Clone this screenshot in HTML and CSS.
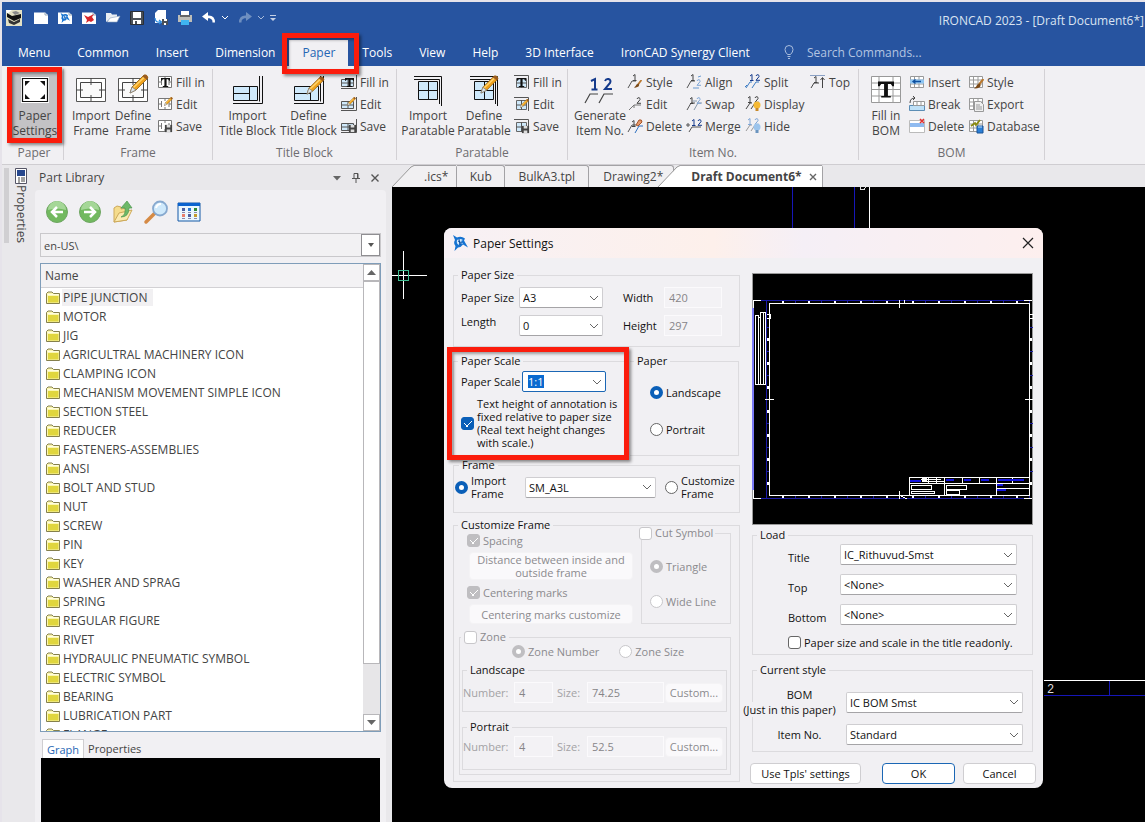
FILE: index.html
```html
<!DOCTYPE html>
<html lang="en">
<head>
<meta charset="utf-8">
<title>IRONCAD 2023 - [Draft Document6*]</title>
<link rel="stylesheet" href="styles.css">
</head>
<body>
<svg class="defs" aria-hidden="true">
  <symbol id="pencil" viewBox="0 0 20 20"><path d="M1 19l2-6L15 1q3-1 4 3L7 16z" fill="#f0a21c" stroke="#8a5a10" stroke-width=".8"/><path d="M4.500 13.500L16 2.500" stroke="#ffd36b" stroke-width="1.500"/><path d="M1 19l2-6 4 3z" fill="#dfe6ea" stroke="#777" stroke-width=".7"/><path d="M15 1q3-1 4 3l-1.500 1.500-4-3z" fill="#9c5c20"/></symbol>
  <symbol id="frame" viewBox="0 0 32 32"><path d="M1.500 4.500h29v23h-29z" fill="#fff" stroke="#555"/><path d="M5.500 8.500h21v15h-21z" fill="#fafafa" stroke="#444"/><path d="M16 4v7M16 21v6M1 16h7M24 16h7" stroke="#444"/></symbol>
  <symbol id="tblock" viewBox="0 0 32 32"><path d="M1.500 12.500h24v14h-24z" fill="#cfe9fb" stroke="#111"/><path d="M1 19.500h16M17.500 12v14" stroke="#111"/><path d="M27.500 2v25.500M30.500 2v27.500H1" fill="none" stroke="#111"/></symbol>
  <symbol id="ptable" viewBox="0 0 32 32"><path d="M6.500 7.500h19v18h-19z" fill="#cfe9fb" stroke="#111"/><path d="M6 16.500h20M16.500 7v19" stroke="#111"/><path d="M2 2.500h27.500V32M2 5.500h25.500v24.500" fill="none" stroke="#111"/></symbol>
  <symbol id="floppy" viewBox="0 0 10 10"><path d="M1 1h8v8H1z" fill="#444"/><path d="M3 1h4v3H3zM3 6h4v3H3z" fill="#ddd"/></symbol>
  <symbol id="s-frame" viewBox="0 0 16 16"><path d="M1.500 2.500h13v11h-13z" fill="#fff" stroke="#777"/><path d="M1 8h3M12 8h3M8 2v3M8 11v3M4.500 5v6M12 5v6" stroke="#777"/></symbol>
  <symbol id="s-block" viewBox="0 0 16 16"><path d="M.500 5.500h12v7H.500z" fill="#cfe9fb" stroke="#555"/><path d="M1 9h11M7 5v7M15.500 1v13.500H0" fill="none" stroke="#555"/></symbol>
  <symbol id="s-table" viewBox="0 0 16 16"><path d="M2.500 4.500h10v9h-10z" fill="#cfe9fb" stroke="#666"/><path d="M2 9h11M7.500 4v10M0 1.500h14.500V15" fill="none" stroke="#555"/></symbol>
  <symbol id="tee" viewBox="0 0 10 10"><path d="M0 0h10v3H9L8 1.500H6.200V9H8v1H2V9h1.800V1.500H2L1 3H0z" fill="#111"/></symbol>
  <symbol id="leader" viewBox="0 0 16 16"><path d="M1 14L5 7h4" fill="none" stroke="#555"/></symbol>
  <symbol id="one" viewBox="0 0 5 7"><path d="M1 2l2-1.500V6M1 6.500h3.500" fill="none" stroke="currentColor"/></symbol>
  <symbol id="two" viewBox="0 0 5 7"><path d="M1 2q.500-1.500 2-1.300 1.500.500 1 2L1 6.300h4" fill="none" stroke="currentColor"/></symbol>
  <symbol id="grid" viewBox="0 0 16 16"><path d="M1.500 2.500h13v11h-13z" fill="#fff" stroke="#999"/><path d="M1 6h14M1 10h14M5.500 2v12M10 2v12" stroke="#999"/></symbol>
  <symbol id="brush" viewBox="0 0 8 8"><path d="M7.500 0L4 4.500" stroke="#b9772c" stroke-width="1.800"/><path d="M4.500 3.500q1.500 1.500 0 3Q2 8 0 7.500 2 6 2.500 4.500z" fill="#7b4a18"/></symbol>
  <symbol id="folder" viewBox="0 0 15 13"><path d="M.500 12.500v-10L2 1h4l1.500 1.500h6v10z" fill="#fbf7b0" stroke="#85804c"/><path d="M2 5h10.500v6.500H2z" fill="#e0d63e"/><path d="M1.500 3.500h11" stroke="#fffde0"/></symbol>
  <symbol id="chev" viewBox="0 0 10 6"><path d="M1 1l4 4 4-4" fill="none" stroke="#666"/></symbol>
  <symbol id="page" viewBox="0 0 16 16"><path d="M1 2.500h11l3 2.500v9H1z" fill="#fff"/><path d="M12 2.500V5h3" fill="none" stroke="#9ab"/></symbol>
  <symbol id="gear" viewBox="0 0 16 16"><path d="M1 0l4 2.500q4-2 8 1l-1 2 4 7-5-3q-2 3-5 3l-3.500 3.500 1-5Q1 8 3 5z" fill="#1673d1"/><path d="M5 5q3-2 6 0l-2 1 2 3-3-1-1 2q-3-1-2-5z" fill="#cfe8ff"/><path d="M6 6l4 2M7 4l1 6" stroke="#0b4fa0"/></symbol>
</svg>

<header class="app-head">
  <div class="titlebar">
    <div class="quick">
      <svg class="i16 logo" viewBox="0 0 16 16"><path d="M0 0h16v16H0z" fill="#e4e1c4"/><path d="M0 0h6L1 4z" fill="#fff"/><path d="M1 3l5 3 9-2v4l-7 3-7-4z" fill="#111"/><path d="M2 9l6 3 6-3v3l-6 3-5-2z" fill="#333"/><path d="M6 2l4-1 4 2-5 2z" fill="#888"/></svg>
      <button aria-label="New"><svg class="i16"><use href="#page"/></svg></button>
      <button aria-label="New drawing"><svg class="i16"><use href="#page"/><use href="#gear" x="3" y="3" width="10" height="10"/></svg></button>
      <button aria-label="New scene"><svg class="i16"><use href="#page"/><path d="M3 5l4 2 6-3-2 3 2 3-3 2-2-1-3 2 1-3z" fill="#d7262b"/></svg></button>
      <button aria-label="Open"><svg class="i16" viewBox="0 0 16 16"><path d="M1 3h5l1 1.500h5V7L5 9l-4 3z" fill="#e9edf2"/><path d="M5 8l10-2-3 6H2z" fill="#fff" stroke="#8fa3bd" stroke-width=".6"/></svg></button>
      <button aria-label="Save"><svg class="i16" viewBox="0 0 16 16"><path d="M1.500 1.500h13v13h-13z" fill="#4a5058" stroke="#2a2e34"/><path d="M4 2h8v6H4zM4 10h8v4H4z" fill="#fff"/><path d="M6 11h2v3H6z" fill="#4a5058"/></svg></button>
      <button aria-label="Save as"><svg class="i16" viewBox="0 0 16 16"><path d="M5 0h8v13H2V3z" fill="#fff"/><path d="M2 8q0 5 6 4M6 10l2.500 2L6 14" fill="none" stroke="#2c8be0" stroke-width="1.300"/><path d="M9 9h6v6H9z" fill="#4a5058"/><path d="M11 9h3v2h-3zM11 13h2v2h-2z" fill="#fff"/></svg></button>
      <button aria-label="Print"><svg class="i16" viewBox="0 0 16 16"><path d="M4 1h8v5H4z" fill="#fff"/><path d="M1 5h14v7H1z" fill="#bdbdb8"/><path d="M3 5h10v2H3z" fill="#666"/><path d="M4 10h8v5H4z" fill="#3fb4f0"/></svg></button>
      <button aria-label="Undo"><svg class="i16" viewBox="0 0 16 16"><path d="M7 2v9L1 6.500zM6 5.500q8-1 8 7h-2.500Q12 8 6 8z" fill="#fff"/></svg></button>
      <svg class="mini" viewBox="0 0 8 6"><path d="M1 1l3 3 3-3" fill="none" stroke="#fff"/></svg>
      <button aria-label="Redo"><svg class="i16" viewBox="0 0 16 16"><path d="M9 2v9l6-4.500zM10 5.500q-8-1-8 7h2.500Q4 8 10 8z" fill="#6f8fc0"/></svg></button>
      <svg class="mini" viewBox="0 0 8 6"><path d="M1 1l3 3 3-3" fill="none" stroke="#a8bbdb"/></svg>
      <svg class="mini" viewBox="0 0 8 8"><path d="M1 1.500h6" stroke="#c5d0e4"/><path d="M1 4h6L4 7z" fill="#c5d0e4"/></svg>
    </div>
    <div class="app-title">IRONCAD 2023 - [Draft Document6*]</div>
  </div>
  <nav class="menubar">
    <button class="menu">Menu</button><button class="menu">Common</button><button class="menu">Insert</button><button class="menu">Dimension</button>
    <div class="marked"><button class="menu menu--on">Paper</button><span class="mark mark--tab"></span></div>
    <button class="menu">Tools</button><button class="menu">View</button><button class="menu">Help</button><button class="menu">3D Interface</button><button class="menu">IronCAD Synergy Client</button>
    <label class="search"><svg class="bulb" viewBox="0 0 10 14"><path d="M3.500 9.500Q1 7 1 4.500a4 4 0 018 0Q9 7 6.500 9.500zM3.500 11.500h3M4 13.500h2" fill="none" stroke="#a9bddd"/></svg><input type="text" placeholder="Search Commands..."></label>
  </nav>
</header>

<section class="ribbon">
  <div class="group">
    <div class="tools tools--paper">
      <div class="marked"><button class="big big--on"><svg class="i32" viewBox="0 0 32 32"><path d="M2 3h28v26H2z" fill="#fff"/><path d="M3.500 4.500h25v23h-25z" fill="none" stroke="#111" stroke-width="1.200"/><path d="M6 7h5l-5 5zM26 7v5l-5-5zM6 25v-5l5 5zM26 25h-5l5-5z" fill="#111"/></svg>Paper<br>Settings</button><span class="mark mark--big"></span></div>
    </div>
    <div class="caption">Paper</div>
  </div>
  <div class="group">
    <div class="tools tools--frame">
      <button class="big"><svg class="i32"><use href="#frame"/></svg>Import<br>Frame</button>
      <button class="big"><svg class="i32"><use href="#frame"/><use href="#pencil" x="12" y="0" width="20" height="20"/></svg>Define<br>Frame</button>
      <div class="stack">
        <button class="small"><svg class="i16"><use href="#s-frame"/><use href="#tee" x="4" y="4" width="9" height="9"/></svg>Fill in</button>
        <button class="small"><svg class="i16"><use href="#s-frame"/><use href="#pencil" x="7" y="1" width="9" height="9"/></svg>Edit</button>
        <button class="small"><svg class="i16"><use href="#s-frame"/><use href="#floppy" x="7" y="6" width="9" height="9"/></svg>Save</button>
      </div>
    </div>
    <div class="caption">Frame</div>
  </div>
  <div class="group">
    <div class="tools tools--title">
      <button class="big"><svg class="i32"><use href="#tblock"/></svg>Import<br>Title Block</button>
      <button class="big"><svg class="i32"><use href="#tblock"/><use href="#pencil" x="13" y="2" width="19" height="19"/></svg>Define<br>Title Block</button>
      <div class="stack">
        <button class="small"><svg class="i16"><use href="#s-block"/><use href="#tee" x="4" y="4" width="9" height="9"/></svg>Fill in</button>
        <button class="small"><svg class="i16"><use href="#s-block"/><use href="#pencil" x="6" y="1" width="9" height="9"/></svg>Edit</button>
        <button class="small"><svg class="i16"><use href="#s-block"/><use href="#floppy" x="7" y="6" width="9" height="9"/></svg>Save</button>
      </div>
    </div>
    <div class="caption">Title Block</div>
  </div>
  <div class="group">
    <div class="tools tools--para">
      <button class="big"><svg class="i32"><use href="#ptable"/></svg>Import<br>Paratable</button>
      <button class="big"><svg class="i32"><use href="#ptable"/><use href="#pencil" x="12" y="1" width="19" height="19"/></svg>Define<br>Paratable</button>
      <div class="stack">
        <button class="small"><svg class="i16"><use href="#s-table"/><use href="#tee" x="3" y="4" width="9" height="9"/></svg>Fill in</button>
        <button class="small"><svg class="i16"><use href="#s-table"/><use href="#pencil" x="6" y="3" width="9" height="9"/></svg>Edit</button>
        <button class="small"><svg class="i16"><use href="#s-table"/><use href="#floppy" x="7" y="7" width="9" height="9"/></svg>Save</button>
      </div>
    </div>
    <div class="caption">Paratable</div>
  </div>
  <div class="group">
    <div class="tools tools--item">
      <button class="big"><svg class="i32 navy" viewBox="0 0 32 32"><path d="M7 7l4-2v10M7.500 15.500h6" fill="none" stroke="currentColor" stroke-width="2"/><path d="M21 7q1-2.500 3.500-2 3 1 1.500 4l-5 6h7" fill="none" stroke="currentColor" stroke-width="2"/><path d="M1 29l5-9h8M15 29l5-9h9" fill="none" stroke="#444" stroke-width="1.200"/></svg>Generate<br>Item No.</button>
      <div class="stack">
        <button class="small"><svg class="i16"><use href="#leader"/><use href="#one" x="5" y="0" width="5" height="7"/><use href="#brush" x="7" y="6" width="8" height="8"/></svg>Style</button>
        <button class="small"><svg class="i16"><use href="#two" x="9" y="1" width="5" height="7"/><path d="M2 14l5-5h7M7 9v3" fill="none" stroke="#777"/></svg>Edit</button>
        <button class="small"><svg class="i16"><use href="#leader"/><path d="M8 15l4-7h4" stroke="#2c6fc0" fill="none"/><use href="#one" x="4" y="2" width="5" height="7"/><path d="M9 7l3-5q3-1 3 2l-4 4z" fill="#e79a6c" stroke="#a4552a"/></svg>Delete</button>
      </div>
      <div class="stack">
        <button class="small"><svg class="i16"><use href="#leader"/><use href="#one" x="4" y="0" width="5" height="7"/><use href="#two" x="10" y="5" width="5" height="7" class="sky"/><path d="M7 14h6M12 3l3-1" stroke="#6a9bd1"/></svg>Align</button>
        <button class="small"><svg class="i16"><use href="#leader"/><path d="M8 14l4-7h4M7 5h4" stroke="#89a" fill="none"/><use href="#one" x="3" y="1" width="5" height="7"/><use href="#two" x="10" y="1" width="5" height="7" class="sky"/></svg>Swap</button>
        <button class="small"><svg class="i16"><path d="M0 7h4M2 5v4M3 14l3-5h9" fill="none" stroke="#555"/><use href="#one" x="5" y="1" width="5" height="7" class="navy"/><use href="#two" x="11" y="1" width="5" height="7" class="navy"/></svg>Merge</button>
      </div>
      <div class="stack">
        <button class="small"><svg class="i16"><path d="M1 14l4-6h2M7 14l4-6h3M2 11l-2 2" fill="none" stroke="#3c7cc4"/><use href="#one" x="4" y="0" width="5" height="7" class="navy"/><use href="#two" x="10" y="0" width="5" height="7" class="navy"/></svg>Split</button>
        <button class="small"><svg class="i16"><path d="M1 13l4-6h2M6 13l4-6" fill="none" stroke="#444"/><use href="#one" x="2" y="0" width="5" height="7"/><use href="#two" x="9" y="0" width="5" height="7"/><circle cx="12" cy="9" r="3.500" fill="#f5b935"/><path d="M10.500 12h3v3h-3z" fill="#c88a2a"/></svg>Display</button>
        <button class="small"><svg class="i16"><path d="M1 13l4-6h2M6 13l4-6" fill="none" stroke="#999"/><use href="#one" x="2" y="0" width="5" height="7" class="sky"/><use href="#two" x="9" y="0" width="5" height="7" class="sky"/><circle cx="12" cy="9" r="3.500" fill="#9cc4ec"/><path d="M10.500 12h3v3h-3z" fill="#6a94bf"/></svg>Hide</button>
      </div>
      <div class="stack">
        <button class="small"><svg class="i16"><path d="M0 1.500h15" stroke="#8aa0c4"/><path d="M1 14l3-5h5M12.500 14V4M10.500 6l2-2.500 2 2.500" fill="none" stroke="#444"/><use href="#one" x="3" y="2" width="5" height="7"/></svg>Top</button>
      </div>
    </div>
    <div class="caption">Item No.</div>
  </div>
  <div class="group">
    <div class="tools tools--bom">
      <button class="big"><svg class="i32" viewBox="0 0 32 32"><path d="M1.500 2.500h29v26h-29z" fill="#fff" stroke="#999"/><path d="M1 9h30M1 15.500h30M1 22h30M9 2v27M23 2v27" stroke="#999"/><use href="#tee" x="8" y="7" width="16" height="17"/></svg>Fill in<br>BOM</button>
      <div class="stack">
        <button class="small"><svg class="i16"><use href="#grid"/><path d="M1 5.500h14v4H1z" fill="#8ec5f2"/><path d="M4 7.500h8M6.500 5.500l-2.500 2 2.500 2" fill="none" stroke="#0d4fa0" stroke-width="1.300"/></svg>Insert</button>
        <button class="small"><svg class="i16" viewBox="0 0 16 16"><path d="M.500 9.500h15v5H.500z" fill="#bfe1f8" stroke="#5b8db5"/><path d="M4.500 5.500h11v4h-11zM8 5v4M12 5v4" fill="#fff" stroke="#999"/><path d="M1 7q0-5 5-5M4 0l2 2-2 2" fill="none" stroke="#444"/></svg>Break</button>
        <button class="small"><svg class="i16" viewBox="0 0 16 16"><path d="M.500 2.500h15v12H.500z" fill="#fff" stroke="#bbb"/><path d="M1 5h14v4H1z" fill="#90bbf0"/><path d="M11 1l4 4M15 1l-4 4" stroke="#e03030" stroke-width="1.500"/></svg>Delete</button>
      </div>
      <div class="stack">
        <button class="small"><svg class="i16"><use href="#grid"/><use href="#brush" x="6" y="5" width="10" height="10"/></svg>Style</button>
        <button class="small"><svg class="i16"><use href="#grid"/><path d="M6.500 5.500h6l3 3v7h-9z" fill="#f0f0f0" stroke="#999"/><path d="M8 9h4M8 11h6M8 13h6" stroke="#999"/></svg>Export</button>
        <button class="small"><svg class="i16"><use href="#grid"/><path d="M3 8l4-3 1 2 4-5" fill="none" stroke="#8a8a10" stroke-width="1.800"/><path d="M9 8h6v7H9z" fill="#2b7fd6" stroke="#1a5294"/><path d="M10 9h4" stroke="#bfe0ff"/></svg>Database</button>
      </div>
    </div>
    <div class="caption">BOM</div>
  </div>
</section>

<main class="work">
  <aside class="rail"><div class="rail-grip"></div>
    <button class="rail-tab"><svg class="i16" viewBox="0 0 16 16"><path d="M2.500.500h11v15h-11z" fill="#fff" stroke="#556"/><path d="M4 2h8v6H4z" fill="#26478d"/><path d="M5 10h2M5 12h2M9 9v5M11 9v5M5 14h2" stroke="#444"/></svg><span>Properties</span></button>
  </aside>
  <aside class="panel">
    <div class="panel-head"><h2>Part Library</h2>
      <button aria-label="Menu"><svg width="10" height="10"><path d="M1 3h8L5 7.500z" fill="#666"/></svg></button>
      <button aria-label="Pin"><svg width="10" height="10"><path d="M3 .500h4v5H3zM1 5.500h8M5 6v4M6.500 1v4" fill="none" stroke="#555"/></svg></button>
      <button aria-label="Close"><svg width="10" height="10"><path d="M1.500 1.500l7 7M8.500 1.500l-7 7" stroke="#555" stroke-width="1.400"/></svg></button>
    </div>
    <div class="panel-body">
      <div class="nav-tools">
        <button aria-label="Back"><svg class="i24" viewBox="0 0 24 24"><circle cx="12" cy="12" r="10.500" fill="#72b95f" stroke="#6fa663"/><path d="M3 10a9 9 0 0118 0q-9-3-18 0z" fill="#a5d797"/><path d="M18 12H8M12 7l-5 5 5 5" fill="none" stroke="#fff" stroke-width="2.500"/></svg></button>
        <button aria-label="Forward"><svg class="i24" viewBox="0 0 24 24"><circle cx="12" cy="12" r="10.500" fill="#72b95f" stroke="#6fa663"/><path d="M3 10a9 9 0 0118 0q-9-3-18 0z" fill="#a5d797"/><path d="M6 12h10M12 7l5 5-5 5" fill="none" stroke="#fff" stroke-width="2.500"/></svg></button>
        <button aria-label="Up"><svg class="i24" viewBox="0 0 24 24"><path d="M3 22V8l3-2 4 1v2l6-1v12z" fill="#f5dc8c" stroke="#cda95a"/><path d="M3 22l5-9 13-3-5 10z" fill="#fbeab0" stroke="#cda95a"/><path d="M10 17q5-2 4-9h-4l6-7 5 7h-3q0 9-8 9z" fill="#6db868" stroke="#4d9650" stroke-width=".7"/></svg></button>
        <button aria-label="Find"><svg class="i24" viewBox="0 0 24 24"><path d="M2 22l9-9" stroke="#d58a45" stroke-width="3.500" stroke-linecap="round"/><circle cx="16" cy="8.500" r="7" fill="#cfe9fb" stroke="#87a9cf" stroke-width="1.800"/><path d="M12 8q1-4 5-4" fill="none" stroke="#fff" stroke-width="2"/></svg></button>
        <button aria-label="View"><svg class="i24" viewBox="0 0 24 24"><path d="M1 3h22v18H1z" fill="#eaf7ff" stroke="#1458a6"/><path d="M1 3h22v3H1z" fill="#0a63cf"/><path d="M5 8h3v3H5zM11 14h3v3h-3z" fill="#4d5f9f"/><path d="M11 8h3v3h-3z" fill="#2c78d0"/><path d="M17 8h3v3h-3z" fill="#2f8a36"/><path d="M5 14h3v3H5z" fill="#e8806c"/><path d="M17 14h3v3h-3z" fill="#c49b2e"/><path d="M5 12.500h3M11 12.500h3M17 12.500h3M5 18.500h3M11 18.500h3M17 18.500h3" stroke="#88a"/></svg></button>
      </div>
      <div class="path"><input type="text" value="en-US\" aria-label="Library path"><button aria-label="Choose path"><svg width="6" height="4"><path d="M0 0h6L3 4z" fill="#555"/></svg></button></div>
      <div class="listbox">
        <div class="list">
          <div class="list-head">Name</div>
          <ul>
            <li class="cur"><svg><use href="#folder"/></svg><span>PIPE JUNCTION</span></li>
            <li><svg><use href="#folder"/></svg><span>MOTOR</span></li>
            <li><svg><use href="#folder"/></svg><span>JIG</span></li>
            <li><svg><use href="#folder"/></svg><span>AGRICULTRAL MACHINERY ICON</span></li>
            <li><svg><use href="#folder"/></svg><span>CLAMPING ICON</span></li>
            <li><svg><use href="#folder"/></svg><span>MECHANISM MOVEMENT SIMPLE ICON</span></li>
            <li><svg><use href="#folder"/></svg><span>SECTION STEEL</span></li>
            <li><svg><use href="#folder"/></svg><span>REDUCER</span></li>
            <li><svg><use href="#folder"/></svg><span>FASTENERS-ASSEMBLIES</span></li>
            <li><svg><use href="#folder"/></svg><span>ANSI</span></li>
            <li><svg><use href="#folder"/></svg><span>BOLT AND STUD</span></li>
            <li><svg><use href="#folder"/></svg><span>NUT</span></li>
            <li><svg><use href="#folder"/></svg><span>SCREW</span></li>
            <li><svg><use href="#folder"/></svg><span>PIN</span></li>
            <li><svg><use href="#folder"/></svg><span>KEY</span></li>
            <li><svg><use href="#folder"/></svg><span>WASHER AND SPRAG</span></li>
            <li><svg><use href="#folder"/></svg><span>SPRING</span></li>
            <li><svg><use href="#folder"/></svg><span>REGULAR FIGURE</span></li>
            <li><svg><use href="#folder"/></svg><span>RIVET</span></li>
            <li><svg><use href="#folder"/></svg><span>HYDRAULIC PNEUMATIC SYMBOL</span></li>
            <li><svg><use href="#folder"/></svg><span>ELECTRIC SYMBOL</span></li>
            <li><svg><use href="#folder"/></svg><span>BEARING</span></li>
            <li><svg><use href="#folder"/></svg><span>LUBRICATION PART</span></li>
            <li><svg><use href="#folder"/></svg><span>FLANGE</span></li>
          </ul>
        </div>
        <div class="scroll"><button aria-label="Scroll up"><svg width="9" height="5"><path d="M0 5h9L4.500 0z" fill="#666"/></svg></button><div class="thumb"></div><button class="down" aria-label="Scroll down"><svg width="9" height="5"><path d="M0 0h9L4.500 5z" fill="#666"/></svg></button></div>
      </div>
      <div class="sub-tabs"><button class="on">Graph</button><button>Properties</button></div>
      <div class="thumbnail"></div>
    </div>
  </aside>

  <section class="docs">
    <div class="doc-tabs">
      <div class="doc doc--slant"><svg class="slant" viewBox="0 0 22 22"><path d="M0 22L20 1.500h2V22z" fill="#f1f0f2"/><path d="M0 22L19 2l3-1.500" fill="none" stroke="#999"/></svg><button>.ics*</button></div>
      <div class="doc doc--kub"><button>Kub</button></div>
      <div class="doc doc--bulk"><button>BulkA3.tpl</button></div>
      <div class="doc doc--draw"><button>Drawing2*</button></div>
      <div class="doc doc--slant doc--on"><svg class="slant" viewBox="0 0 22 22"><path d="M0 22L20 1.500h2V22z" fill="#fff"/><path d="M0 22L19 2l3-1.500" fill="none" stroke="#999"/></svg><button>Draft Document6*</button><button class="doc-close" aria-label="Close document"><svg width="8" height="8"><path d="M1 1l6 6M7 1L1 7" stroke="#666" stroke-width="1.400"/></svg></button></div>
    </div>
    <div class="canvas">
      <svg class="drawing"><g fill="none" shape-rendering="crispEdges">
        <path d="M400.500 0v45M462.500 0v45M652 508.500h120M717.500 494v15" stroke="#1616b8"/>
        <path d="M477.500 0v45M652 493.500h120M11.500 64v48M0 88.500h35" stroke="#fff"/>
        <path d="M468.500 0v2h4l1.500-2" stroke="#ddd"/>
        <path d="M6.500 83.500h10v10h-10z" stroke="#3fc093"/></g>
        <text class="zone-text" x="655" y="506">2</text>
      </svg>

      <form class="dialog">
        <div class="dlg-title"><svg class="i16"><use href="#gear"/></svg><h1>Paper Settings</h1><button type="button" aria-label="Close"><svg width="12" height="12"><path d="M1 1l10 10M11 1L1 11" stroke="#222" stroke-width="1.200"/></svg></button></div>
        <div class="dlg-body">
          <div class="col">
            <fieldset class="f-size"><legend>Paper Size</legend>
              <label for="psize">Paper Size</label><span class="combo"><select id="psize"><option>A3</option></select><svg><use href="#chev"/></svg></span>
              <label class="mid" for="pw">Width</label><input id="pw" type="text" value="420" disabled>
              <label class="top" for="plen">Length</label><span class="combo"><select id="plen"><option>0</option></select><svg><use href="#chev"/></svg></span>
              <label class="mid" for="ph">Height</label><input id="ph" type="text" value="297" disabled>
            </fieldset>
            <div class="pair">
              <div class="marked"><fieldset class="f-scale"><legend>Paper Scale</legend>
                <div class="line"><label for="pscale">Paper Scale</label><span class="combo combo--hot"><select id="pscale"><option>1:1</option></select><svg><use href="#chev"/></svg></span></div>
                <label class="check"><input type="checkbox" checked><span>Text height of annotation is<br>fixed relative to paper size<br>(Real text height changes<br>with scale.)</span></label>
              </fieldset><span class="mark mark--scale"></span></div>
              <fieldset class="f-paper"><legend>Paper</legend>
                <label class="check"><input type="radio" name="orient" checked>Landscape</label>
                <label class="check"><input type="radio" name="orient">Portrait</label>
              </fieldset>
            </div>
            <fieldset class="f-frame"><legend>Frame</legend>
              <label class="check"><input type="radio" name="frame" checked><span>Import<br>Frame</span></label>
              <span class="combo"><select aria-label="Frame"><option>SM_A3L</option></select><svg><use href="#chev"/></svg></span>
              <label class="check"><input type="radio" name="frame"><span>Customize<br>Frame</span></label>
            </fieldset>
            <fieldset class="f-custom"><legend>Customize Frame</legend>
              <div class="cust-top">
                <div class="cust-left">
                  <label class="check off"><input type="checkbox" checked disabled>Spacing</label>
                  <button type="button" class="btn two" disabled>Distance between inside and<br>outside frame</button>
                  <label class="check off"><input type="checkbox" checked disabled>Centering marks</label>
                  <button type="button" class="btn" disabled>Centering marks customize</button>
                </div>
                <fieldset class="f-cut"><legend><label class="check off"><input type="checkbox" disabled>Cut Symbol</label></legend>
                  <label class="check off"><input type="radio" name="cut" checked disabled>Triangle</label>
                  <label class="check off"><input type="radio" name="cut" disabled>Wide Line</label>
                </fieldset>
              </div>
              <fieldset class="f-zone"><legend><label class="check off"><input type="checkbox" disabled>Zone</label></legend>
                <div class="zone-kind"><label class="check off"><input type="radio" name="zone" checked disabled>Zone Number</label><label class="check off"><input type="radio" name="zone" disabled>Zone Size</label></div>
                <fieldset class="f-dir"><legend>Landscape</legend>
                  <label for="ln">Number:</label><input id="ln" type="text" value="4" disabled><label for="ls">Size:</label><input id="ls" type="text" value="74.25" disabled><button type="button" class="btn" disabled>Custom...</button>
                </fieldset>
                <fieldset class="f-dir f-dir--low"><legend>Portrait</legend>
                  <label for="pn">Number:</label><input id="pn" type="text" value="4" disabled><label for="pz">Size:</label><input id="pz" type="text" value="52.5" disabled><button type="button" class="btn" disabled>Custom...</button>
                </fieldset>
              </fieldset>
            </fieldset>
          </div>

          <div class="col col--right">
            <svg class="preview" viewBox="0 0 281 252" preserveAspectRatio="none"><path d="M0 0h281v252H0z" fill="#000"/>
              <g fill="none" shape-rendering="crispEdges">
                <path d="M.500 .500h280v251H.500z" stroke="#999"/>
                <path d="M9 27.500h263M9 225.500h263M14.500 28v198" stroke="#1a1aa8"/><path d="M1 35v182" stroke="#7a7af5" stroke-width="2"/>
                <path d="M43 29.500h235M43 224.500h235" stroke="#2020a0" stroke-width="3" stroke-dasharray="1 25"/>
                <path d="M16 54v150M279 54v150" stroke="#2020a0" stroke-width="3" stroke-dasharray="1 23"/>
                <path d="M30 29h248M30 224h248" stroke="#fff" stroke-width="2" stroke-dasharray="2 24"/>
                <path d="M16 65v150M279 65v150" stroke="#fff" stroke-width="2" stroke-dasharray="3 21"/>
                <path d="M17.500 30.500h260v192h-260z" stroke="#fff"/>
                <path d="M9 27.500H1.500V35M1.500 217v8.500H9M272 27.500h8M272 225.500h8M147.500 27v8M152.500 27v3M147.500 218v8M13 126.500h9M273 126.500h8M278 41h3v4h-3M15 41h3v4h-3" stroke="#fff"/>
                <path d="M3.500 42.500h3v69h-3zM6.500 44.500h2v67h-2zM8.500 39.500h5v72h-5zM11.500 40v71" stroke="#fff"/>
                <path d="M157.500 222v-17.500h120M158 210.500h120M192.500 205v17M210.500 205v5M227.500 205v5M260.500 205v5M244.500 205v17M245 215.500h33M159.500 212.500h20v4h-20zM159.500 218.500h23v2h-23zM194.500 212.500h20v4h-20zM194.500 217.500h13v4h-13zM169 206.500h20M172 208.500h20M176.500 205v5M184.500 205v5M149 223l6 3" stroke="#fff"/>
                <path d="M158 207.500h11M194 207h8M212 207h7M229 207h8M246 207h26M245 212h6M245 217h9" stroke="#1414e0" stroke-width="2"/><path d="M170 207h5" stroke="#fff" stroke-width="4"/>
              </g></svg>
            <fieldset class="f-load"><legend>Load</legend>
              <label for="lt">Title</label><span class="combo"><select id="lt"><option>IC_Rithuvud-Smst</option></select><svg><use href="#chev"/></svg></span>
              <label for="lo">Top</label><span class="combo"><select id="lo"><option>&lt;None&gt;</option></select><svg><use href="#chev"/></svg></span>
              <label for="lb">Bottom</label><span class="combo"><select id="lb"><option>&lt;None&gt;</option></select><svg><use href="#chev"/></svg></span>
              <label class="check wide"><input type="checkbox">Paper size and scale in the title readonly.</label>
            </fieldset>
            <fieldset class="f-style"><legend>Current style</legend>
              <label class="bom" for="sb"><span>BOM</span><span>(Just in this paper)</span></label><span class="combo"><select id="sb"><option>IC BOM Smst</option></select><svg><use href="#chev"/></svg></span>
              <label for="si">Item No.</label><span class="combo"><select id="si"><option>Standard</option></select><svg><use href="#chev"/></svg></span>
            </fieldset>
            <div class="actions"><button type="button" class="btn">Use Tpls' settings</button><button type="button" class="btn btn--ok">OK</button><button type="button" class="btn">Cancel</button></div>
          </div>
        </div>
      </form>
    </div>
  </section>
</main>
</body>
</html>
```
FILE: styles.css
```css
* { box-sizing: border-box; }
html, body { height: 100%; }
body { margin: 0; padding: 2px 0 0 2px; display: flex; flex-direction: column; overflow: hidden; background: #e6e3ea; color: #444; font: 12px/15px "Open Sans", "Noto Sans", sans-serif; }
button, input, select { font: inherit; color: inherit; margin: 0; }
button { padding: 0; border: 0; background: none; }
h1, h2, ul { margin: 0; padding: 0; font: inherit; }
svg { display: block; flex: none; overflow: visible; }
.defs { position: absolute; width: 0; height: 0; }
.i16 { width: 16px; height: 16px; }
.i24 { width: 24px; height: 24px; }
.i32 { width: 32px; height: 32px; }
.navy { color: #143a8c; }
.sky { color: #7fa6d6; }

/* red call-out frames */
.marked { position: relative; }
.mark { position: absolute; z-index: 5; border: 5px solid #fb1c0c; box-shadow: 2px 2px 3px rgba(0, 0, 0, .45), inset 2px 2px 3px rgba(0, 0, 0, .35); pointer-events: none; }
.mark--tab { inset: -7px -11px -8px -7px; }
.mark--big { inset: -4px -4px -3px -5px; }
.mark--scale { inset: -7px 0 -4px -6px; }

/* title and menus */
.app-head { background: #2754a0; color: #fff; }
.titlebar { display: flex; justify-content: space-between; align-items: center; height: 32px; padding: 0 1px 0 4px; }
.quick { display: flex; align-items: center; gap: 8px; }
.quick .logo { margin-right: 3px; }
.quick .mini { width: 8px; height: 8px; margin-left: -4px; }
.app-title { color: #dbe4f2; padding-top: 5px; }
.menubar { display: flex; align-items: flex-end; gap: 1px; height: 32px; padding-left: 3px; }
.menu { display: block; height: 26px; padding: 0 13px 2px; white-space: nowrap; }
.menu--on { background: #f1f0f3; color: #2566b4; }
.search { display: flex; align-items: center; gap: 13px; height: 26px; margin-left: 20px; padding-bottom: 2px; }
.search .bulb { width: 10px; height: 14px; }
.search input { width: 150px; padding: 0; border: 0; background: none; }
.search input::placeholder { color: #b3c4e1; opacity: 1; }

/* ribbon */
.ribbon { display: flex; height: 99px; padding: 3px 0 4px 3px; background: #f1f0f3; border-bottom: 1px solid #cfcdd1; }
.group { display: flex; flex-direction: column; justify-content: space-between; border-right: 1px solid #d3d1d5; }
.tools { display: grid; padding-top: 2px; }
.tools--paper { grid-template-columns: 46px; padding-left: 7px; padding-right: 5px; }
.tools--frame { grid-template-columns: 42px 42px 52px; padding-left: 6px; padding-right: 6px; }
.tools--frame .stack { padding-left: 3px; }
.tools--title { grid-template-columns: 61px 61px 56px; padding-left: 4px; padding-right: 1px; }
.tools--para { grid-template-columns: 56px 56px 54px; padding-left: 3px; padding-right: 1px; }
.tools--title .stack, .tools--para .stack { padding-left: 2px; }
.tools--item { grid-template-columns: 54px 59px 59px 65px 46px; padding-left: 5px; padding-right: 2px; }
.tools--bom { grid-template-columns: 46px 59px 74px; padding-left: 4px; padding-right: 2px; }
.big { display: flex; flex-direction: column; align-items: center; width: 100%; height: 69px; padding-top: 3px; white-space: nowrap; line-height: 15px; }
.big .i32 { margin-bottom: 2px; }
.big--on { background: #c3c2c5; border: 1px solid #a9a8ab; padding-top: 2px; }
.stack { display: flex; flex-direction: column; min-width: 0; }
.small { display: flex; align-items: center; gap: 3px; height: 22px; white-space: nowrap; }
.caption { text-align: center; color: #6e6d70; }

/* work area */
.work { flex: 1; display: flex; min-height: 0; background: #e9e8eb; }
.rail { display: flex; width: 33px; padding-top: 3px; }
.rail-grip { width: 5px; height: 75px; margin-left: 2px; background: #d0cfd2; }
.rail-tab { display: flex; flex-direction: column; align-items: center; gap: 1px; width: 24px; align-self: flex-start; }
.rail-tab span { writing-mode: vertical-rl; }
.panel { display: flex; flex-direction: column; width: 351px; flex: none; }
.panel-head { display: flex; align-items: center; gap: 9px; height: 25px; padding: 0 6px 0 4px; }
.panel-head h2 { flex: 1; }
.panel-body { flex: 1; display: flex; flex-direction: column; min-height: 0; padding: 10px 5px 0; background: #f1f0f3; border-radius: 4px 4px 0 0; }
.nav-tools { display: flex; align-items: flex-start; gap: 9px; padding-left: 5px; height: 33px; }
.path { display: flex; height: 24px; background: #f2f1f3; border: 1px solid #c9c8cb; }
.path input { flex: 1; padding: 0 3px; border: 0; background: none; font-size: 11px; min-width: 0; }
.path button { display: grid; place-items: center; width: 19px; background: #fff; border: 1px solid #8f8e92; }
.listbox { flex: 1; display: flex; min-height: 0; margin-top: 6px; border: 1px solid #7f9db9; background: #fff; }
.list { flex: 1; min-width: 0; overflow: hidden; }
.list-head { height: 24px; padding: 4px; background: #f3f2f4; border-bottom: 1px solid #d2d1d4; }
.list ul { list-style: none; }
.list li { display: flex; align-items: center; height: 19px; padding-left: 5px; gap: 1px; white-space: nowrap; }
.list li svg { width: 15px; height: 13px; }
.list li span { padding: 1px 6px 1px 1px; }
.list .cur span { background: #f1f0f2; }
.scroll { display: flex; flex-direction: column; width: 17px; background: #e7e6e8; }
.scroll button { display: grid; place-items: center; height: 17px; background: #fff; border: 1px solid #b8b7ba; }
.scroll .thumb { flex: 1; margin-bottom: 50px; background: #fff; border: 1px solid #b8b7ba; }
.sub-tabs { display: flex; padding-left: 2px; margin-top: 7px; }
.sub-tabs button { height: 19px; padding: 0 4px; font-size: 11px; }
.sub-tabs .on { background: #fff; color: #2566b4; border: 1px solid #cfced1; border-bottom: 0; }
.thumbnail { height: 64px; margin: 0 1px; background: #000; }

/* documents */
.docs { flex: 1; display: flex; flex-direction: column; min-width: 0; margin-left: 6px; }
.doc-tabs { display: flex; height: 22px; }
.doc { display: flex; align-items: center; justify-content: center; border: 1px solid #a3a2a5; border-width: 1px 1px 0 0; border-radius: 0 3px 0 0; background: #f1f0f2; white-space: nowrap; }
.doc--kub { width: 48px; }
.doc--bulk { width: 84px; }
.doc--draw { width: 85px; padding-left: 4px; }
.doc--slant { border-top: 0; background: none; justify-content: flex-start; }
.doc .slant { width: 22px; height: 22px; }
.doc--slant button { height: 22px; background: #f1f0f2; border-top: 1px solid #a3a2a5; padding: 0 8px 0 10px; }
.doc--on { margin-left: -16px; }
.doc--on button { background: #fff; font-weight: 700; padding: 0 4px 0 11px; }
.doc--on .doc-close { padding: 0 5px 0 3px; }
.canvas { position: relative; flex: 1; min-height: 0; background: #000; overflow: hidden; }
.drawing { position: absolute; inset: 0; width: 100%; height: 100%; }
.zone-text { fill: #ddd; font: 12px "Liberation Mono", monospace; }

/* dialog window */
.dialog { position: absolute; left: 52px; top: 41px; width: 599px; background: #f1f0f3; border-radius: 8px; color: #111; font: 11px/13px "Open Sans", "Noto Sans", sans-serif; overflow: hidden; }
.dlg-title { display: flex; align-items: center; gap: 5px; height: 30px; padding: 0 9px 0 8px; background: linear-gradient(90deg, #f7f1f5, #fdf0eb 45%, #f5eff6 60%, #fdefee); font-size: 12px; }
.dlg-title h1 { flex: 1; }
.dlg-body { display: grid; grid-template-columns: 287fr 286fr; gap: 10px; padding: 10px 7px 4px 9px; }
.col { display: flex; flex-direction: column; min-width: 0; }
.col--right { padding-top: 5px; }
fieldset { min-width: 0; margin: 0; padding: 0; border: 1px solid #dcdbde; }
legend { margin-left: 4px; padding: 0 3px; height: 14px; line-height: 14px; }
label { white-space: nowrap; }
.combo { display: grid; align-items: center; height: 21px; }
.combo select { grid-area: 1 / 1; width: 100%; height: 21px; padding: 0 3px; appearance: none; background: #fff; border: 1px solid #cfced1; border-bottom-color: #a5a4a7; border-radius: 2px; }
.combo svg { grid-area: 1 / 1; justify-self: end; width: 10px; height: 6px; margin-right: 4px; pointer-events: none; }
.combo--hot select { padding-left: 5px; color: #fff; border-color: #1b67b5; background: linear-gradient(#0a6ad0, #0a6ad0) 5px 3px / 16px 13px no-repeat #fff; }
.combo--hot option { color: #111; }
fieldset input[type=text] { width: 100%; min-width: 0; height: 21px; padding: 0 4px; background: #f3f2f5; border: 1px solid #fbfafc; color: #868588; }
.check { display: flex; align-items: center; gap: 3px; }
.check input { appearance: none; flex: none; width: 13px; height: 13px; background: #fff; border: 1px solid #666; border-radius: 3px; }
.check input[type=radio] { border-radius: 50%; }
.check input[type=radio]:checked { border: 4px solid #0a5fb8; }
.check input[type=checkbox]:checked { border-color: #0a5fb8; background: linear-gradient(135deg, transparent 43%, #fff 43% 57%, transparent 57%) 4px 3px / 6px 6px no-repeat, linear-gradient(45deg, transparent 38%, #fff 38% 62%, transparent 62%) 2px 5px / 4px 4px no-repeat, #0a5fb8; }
.off { color: #8b8a8e; }
.off input { border-color: #c8c7ca; }
.check.off input[type=radio]:checked { border-color: #bfbec1; }
.check.off input[type=checkbox]:checked { background-color: #bfbec1; border-color: #bfbec1; }
.btn { height: 21px; background: #fff; border: 1px solid #cfced1; border-radius: 4px; white-space: nowrap; }
.btn:disabled { background: #faf9fb; border-color: #f4f3f5; color: #8b8a8e; height: 20px; }
.btn.two:disabled { height: 28px; line-height: 13px; }

.f-size { display: grid; grid-template-columns: 58px 84px 61px 58px; row-gap: 7px; align-items: center; padding: 5px 7px 10px; }
.f-size legend, .f-scale legend { margin-left: -3px; }
.f-size .mid { padding-left: 20px; }
.f-size .top { align-self: start; }
.pair { display: grid; grid-template-columns: 176fr 110fr; gap: 1px; margin-top: 7px; }
.f-scale { height: 100%; padding: 3px 7px 6px; display: grid; row-gap: 5px; }
.f-scale .line { display: grid; grid-template-columns: 61px 84px; align-items: center; }
.f-paper { display: flex; flex-direction: column; gap: 24px; margin-right: 1px; padding: 18px 0 0 20px; border-left: 0; }
.f-paper legend { margin-left: -16px; }
.f-frame { display: grid; grid-template-columns: 70px 131px 76px; align-items: center; margin-top: 2px; padding: 2px 0 12px 1px; }
.f-frame > .check:last-child { padding-left: 9px; }
.f-custom { margin-top: 5px; padding: 1px 8px 6px 5px; }
.f-custom > legend { margin-left: -1px; }
.cust-top { display: grid; grid-template-columns: 164px 90px; justify-content: space-between; padding-left: 10px; }
.cust-left { display: flex; flex-direction: column; gap: 5px; }
.cust-left .check { height: 14px; margin-left: -2px; }
.f-cut { display: flex; flex-direction: column; gap: 22px; margin-top: -7px; padding: 20px 0 0 8px; }
.f-cut legend { margin-left: -13px; padding: 0 2px; background: #f1f0f3; }
.f-zone { margin-top: 6px; padding: 0 3px 4px 2px; }
.f-zone > legend { margin-left: -1px; }
.zone-kind { display: flex; gap: 20px; padding-left: 50px; height: 14px; }
.f-dir { display: grid; grid-template-columns: 50px 39px 32px 77px 58px; column-gap: 1px; align-items: center; margin-top: 5px; padding: 5px 0 8px; color: #a3a2a5; }
.f-dir legend { color: #111; }
.f-dir label:nth-of-type(2) { padding-left: 3px; }
.f-dir--low { margin-top: 8px; padding: 2px 0 12px; }

.preview { width: 281px; max-width: 100%; height: 252px; margin-left: 2px; }
.f-load, .f-style { margin: 0 3px 0 2px; }
.f-load { display: grid; grid-template-columns: 52px 177px; row-gap: 9px; align-items: center; margin-top: 3px; padding: 2px 0 5px 35px; }
.f-load legend { margin-left: -31px; }
.f-load > label:not(.wide) { padding-top: 6px; }
.f-load .wide { grid-column: 1 / 3; margin-top: 2px; }
.f-style { display: grid; grid-template-columns: 93px 177px; row-gap: 7px; align-items: center; margin-top: 8px; padding: 10px 0 6px; }
.f-style > label { text-align: center; line-height: 15px; }
.f-style .bom { display: flex; flex-direction: column; align-items: center; }
.f-style .bom span:last-child { margin: 0 10px 0 -10px; background: #f1f0f3; }
.actions { display: grid; grid-template-columns: 111px 86px 73px; column-gap: 8px; margin-top: 11px; }
.btn--ok { margin-left: 13px; border-color: #1b67b5; }
```
